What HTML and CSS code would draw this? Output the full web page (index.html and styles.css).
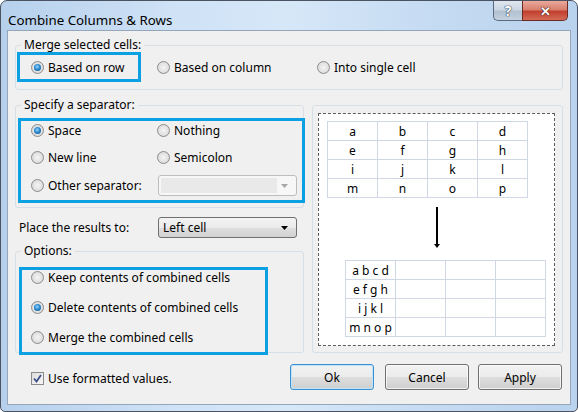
FILE: index.html
```html
<!DOCTYPE html>
<html>
<head>
<meta charset="utf-8">
<title>Combine Columns &amp; Rows</title>
<link rel="stylesheet" href="styles.css">
</head>
<body>
<div class="window">
  <div class="titlebar">
    <span class="title">Combine Columns &amp; Rows</span>
    <div class="caption-btns">
      <span class="cbtn help">?</span>
      <span class="cbtn close">✕</span>
    </div>
  </div>
  <div class="client">
    <div class="group merge">
      <div class="legend">Merge selected cells:</div>
      <div class="merge-row">
        <div class="hl hl-merge">
          <label class="opt"><span class="radio on"></span>Based on row</label>
        </div>
        <label class="opt mcol2"><span class="radio"></span>Based on column</label>
        <label class="opt"><span class="radio"></span>Into single cell</label>
      </div>
    </div>

    <div class="middle">
      <div class="left">
        <div class="group sep">
          <div class="legend">Specify a separator:</div>
          <div class="hl hl-sep">
            <label class="opt"><span class="radio on"></span>Space</label>
            <label class="opt"><span class="radio"></span>Nothing</label>
            <label class="opt"><span class="radio"></span>New line</label>
            <label class="opt"><span class="radio"></span>Semicolon</label>
            <label class="opt"><span class="radio"></span>Other separator:</label>
            <div class="combo disabled">
              <span class="field"></span>
              <svg class="arrow-dd" width="7" height="4" viewBox="0 0 7 4"><path d="M0 0H7L3.5 4Z" fill="#a7a7a7"/></svg>
            </div>
          </div>
        </div>

        <div class="place-row">
          <span class="place-label">Place the results to:</span>
          <div class="combo">
            <span class="combo-text">Left cell</span>
            <svg class="arrow-dd" width="7" height="4" viewBox="0 0 7 4"><path d="M0 0H7L3.5 4Z" fill="#000"/></svg>
          </div>
        </div>

        <div class="group options">
          <div class="legend">Options:</div>
          <div class="hl hl-opt">
            <label class="opt"><span class="radio"></span>Keep contents of combined cells</label>
            <label class="opt"><span class="radio on"></span>Delete contents of combined cells</label>
            <label class="opt"><span class="radio"></span>Merge the combined cells</label>
          </div>
        </div>
      </div>

      <div class="preview">
        <div class="dash">
          <table class="grid g1">
            <tr><td>a</td><td>b</td><td>c</td><td>d</td></tr>
            <tr><td>e</td><td>f</td><td>g</td><td>h</td></tr>
            <tr><td>i</td><td>j</td><td>k</td><td>l</td></tr>
            <tr><td>m</td><td>n</td><td>o</td><td>p</td></tr>
          </table>
          <svg class="down-arrow" width="8" height="42" viewBox="0 0 8 42">
            <rect x="3" y="0" width="2" height="38" fill="#000"/>
            <path d="M1 37H7L4 41Z" fill="#000"/>
          </svg>
          <table class="grid g2">
            <tr><td>a b c d</td><td></td><td></td><td></td></tr>
            <tr><td>e f g h</td><td></td><td></td><td></td></tr>
            <tr><td>i j k l</td><td></td><td></td><td></td></tr>
            <tr><td>m n o p</td><td></td><td></td><td></td></tr>
          </table>
        </div>
      </div>
    </div>

    <div class="bottom">
      <label class="chk-opt">
        <span class="chk"><svg width="9" height="9" viewBox="0 0 9 9"><path d="M1 4.5L3.5 7.5L8 1" fill="none" stroke="#3c4f8a" stroke-width="1.8"/></svg></span>
        Use formatted values.
      </label>
      <div class="buttons">
        <button class="btn default">Ok</button>
        <button class="btn cancel">Cancel</button>
        <button class="btn apply">Apply</button>
      </div>
    </div>
  </div>
</div>
</body>
</html>
```
FILE: styles.css
```css
* { box-sizing: border-box; }
html, body { margin: 0; padding: 0; background: #ffffff; }
body {
  font-family: "Noto Sans", "Open Sans", sans-serif;
  font-size: 12px;
  color: #000;
}
.window {
  width: 578px;
  height: 412px;
  border: 1px solid #4b5261;
  border-radius: 7px 7px 5px 5px;
  background: linear-gradient(to right, #b6d0ec 0%, #cfe2f6 30%, #d6e7f8 50%, #c5dbf2 75%, #b9d2ed 100%);
  padding: 0 6px 6px 6px;
  display: flex;
  flex-direction: column;
  overflow: hidden;
}
.titlebar {
  height: 29px;
  display: flex;
  justify-content: space-between;
  align-items: flex-start;
}
.title {
  padding-left: 1px;
  margin-top: 11px;
  line-height: 17px;
  font-size: 13.3px;
  color: #000;
}
.caption-btns {
  display: flex;
  margin-right: 3px;
}
.cbtn {
  height: 20px;
  display: flex;
  align-items: center;
  justify-content: center;
  color: #fff;
  font-weight: bold;
  border: 1px solid #5a6a80;
  border-top: none;
}
.help {
  width: 29px;
  border-radius: 0 0 0 5px;
  background: linear-gradient(#dfe6ee 0%, #ccd7e3 45%, #b2c0d0 55%, #c4d1de 100%);
  font-size: 14px;
  text-shadow: 0 0 1px #30445e, 0 0 1px #30445e, 0 0 1px #30445e;
  border-right: none;
}
.close {
  width: 46px;
  border-radius: 0 0 5px 0;
  border-color: #6b2a24;
  background: linear-gradient(#e9a99c 0%, #d9806f 45%, #c2402f 55%, #d46a57 100%);
  font-size: 13px;
  text-shadow: 0 0 1px #4b1510, 0 0 1px #4b1510, 0 0 1px #4b1510;
}
.client {
  flex: 1;
  background: #f0f0f0;
  border: 1px solid #96a6ba;
  padding: 14px 7px 0 7px;
}
.group {
  border: 1px solid #d5dfe5;
  border-radius: 3px;
}
.legend {
  display: table;
  margin: -8px 0 0 5px;
  padding: 0 3px;
  line-height: 14px;
  background: #f0f0f0;
}
.hl {
  border: 3px solid #0aa0e2;
}
.opt {
  display: flex;
  align-items: center;
  white-space: nowrap;
}
.radio {
  width: 13px;
  height: 13px;
  flex: none;
  border-radius: 50%;
  border: 1px solid #8c8c8c;
  background: radial-gradient(circle at 50% 50%, #f4f4f4 0%, #e2e2e2 55%, #cfcfcf 100%);
  margin-right: 4px;
  display: inline-flex;
  align-items: center;
  justify-content: center;
}
.radio.on::after {
  content: "";
  width: 7px;
  height: 7px;
  border-radius: 50%;
  background: radial-gradient(circle at 45% 40%, #9fd6fa 0%, #2a8ad0 45%, #0f4a80 100%);
}

/* merge group */
.merge { padding-bottom: 7px; }
.merge-row {
  display: flex;
  align-items: center;
}
.hl-merge {
  width: 124px;
  height: 30px;
  margin-left: 1px;
  padding-left: 11px;
  display: flex;
  align-items: center;
}
.mcol2 {
  margin-left: 16px;
  width: 160px;
}

/* middle */
.middle {
  display: flex;
  gap: 8px;
  margin-top: 15px;
}
.left {
  width: 289px;
  display: flex;
  flex-direction: column;
}
.sep { padding-bottom: 4px; }
.hl-sep {
  margin: 6px 0 0 2px;
  width: 287px;
  padding: 0 0 4px 10px;
  display: grid;
  grid-template-columns: 126px 1fr;
  grid-template-rows: 18px 18px 21px;
  row-gap: 9px;
  align-items: center;
}
.combo {
  width: 139px;
  height: 21px;
  border: 1px solid #707070;
  border-radius: 3px;
  background: linear-gradient(#f3f3f3 0%, #ebebeb 50%, #dedede 51%, #d2d2d2 100%);
  display: flex;
  align-items: center;
  justify-content: space-between;
  padding: 0 8px 0 4px;
}
.combo.disabled {
  margin-left: 1px;
  border-color: #bdbdbd;
  background: #f7f7f7;
  padding: 2px 8px 2px 2px;
  align-items: stretch;
}
.combo.disabled .field {
  width: 116px;
  background: #e9e9e9;
}
.combo.disabled .arrow-dd { align-self: center; }
.combo-text { line-height: 16px; }

.place-row {
  display: flex;
  align-items: center;
  margin-top: 9px;
  padding-left: 4px;
}
.place-label { width: 139px; }

.options { margin-top: 13px; }
.hl-opt {
  margin: 9px 0 -3px 3px;
  width: 249px;
  padding: 0 0 8px 9px;
  display: grid;
  grid-template-rows: 14px 14px 14px;
  row-gap: 16px;
  align-items: center;
}

/* preview */
.preview {
  width: 251px;
  height: 248px;
  border: 1px solid #d5dfe5;
  border-radius: 3px;
  padding: 7px 7px 6px 5px;
}
.dash {
  height: 100%;
  border: 1px dashed #5a5a5a;
  background: #fff;
  padding-top: 7px;
  display: flex;
  flex-direction: column;
  align-items: flex-start;
}
.grid {
  border-collapse: collapse;
  table-layout: fixed;
}
.grid td {
  border: 1px solid #d0d7e5;
  width: 50px;
  height: 19px;
  padding: 0;
  text-align: center;
  line-height: 17px;
  font-size: 12px;
}
.g1 { margin-left: 8px; }
.down-arrow { margin: 9px 0 0 114px; }
.g2 { margin: 11px 0 0 26px; }

/* bottom */
.bottom {
  display: flex;
  align-items: center;
  justify-content: space-between;
  margin-top: 11px;
  padding-left: 16px;
}
.chk-opt {
  display: flex;
  align-items: center;
  margin-top: 2px;
}
.chk {
  width: 13px;
  height: 13px;
  border: 1px solid #8c8c8c;
  background: linear-gradient(135deg, #dcdcdc, #f8f8f8);
  display: inline-flex;
  align-items: center;
  justify-content: center;
  margin-right: 4px;
}
.buttons {
  display: flex;
  margin-right: 1px;
}
.btn {
  width: 84px;
  height: 26px;
  font-family: inherit;
  font-size: 12px;
  color: #000;
  border: 1px solid #707070;
  border-radius: 3px;
  background: linear-gradient(#f2f2f2 0%, #ebebeb 50%, #dddddd 51%, #cfcfcf 100%);
  box-shadow: inset 0 0 0 1px rgba(255,255,255,0.7);
  padding: 0;
}
.btn.default {
  border-color: #3c8fd0;
  box-shadow: inset 0 0 0 1px #bfe4f8;
}
.cancel { margin-left: 11px; }
.apply { margin-left: 9px; }
```
